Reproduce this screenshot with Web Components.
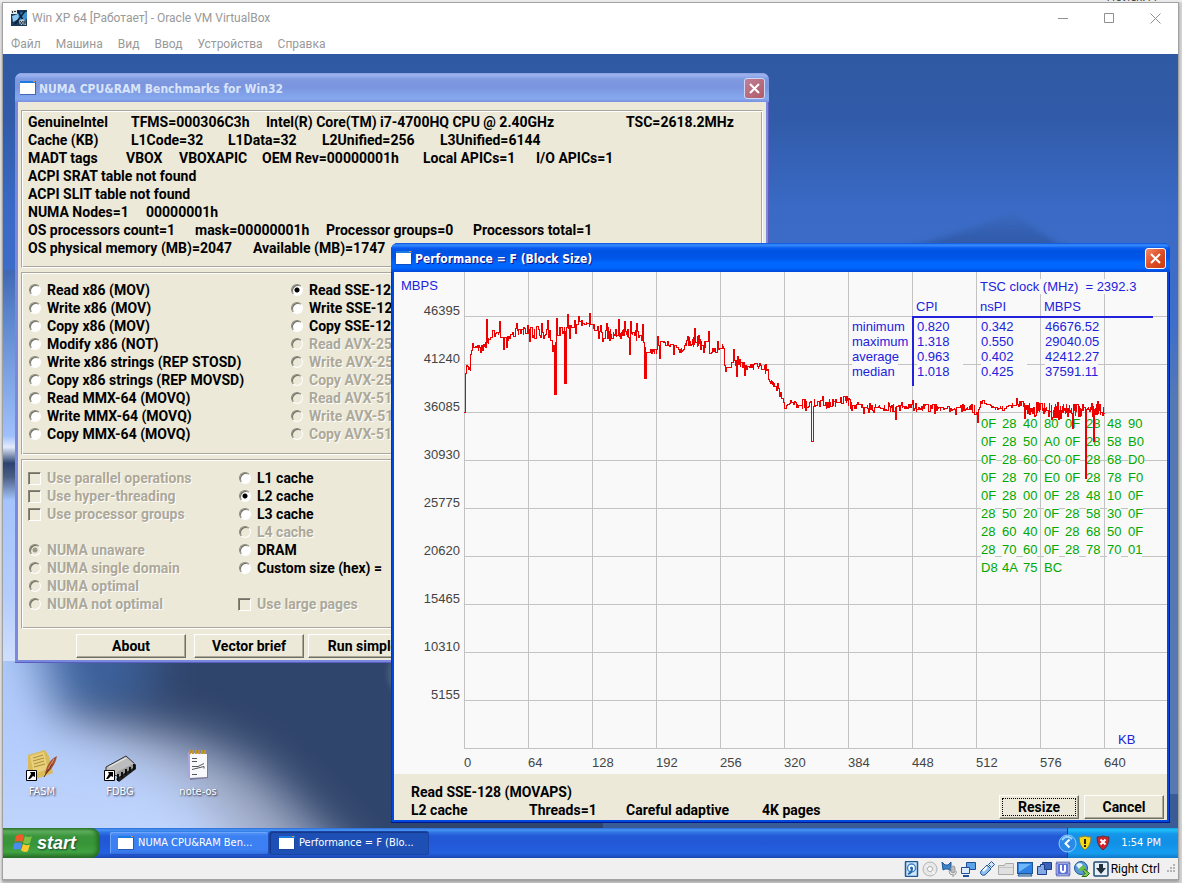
<!DOCTYPE html>
<html lang="ru">
<head>
<meta charset="utf-8">
<title>Win XP 64 [Работает] - Oracle VM VirtualBox</title>
<style>
  html, body { margin: 0; background: #d6d6d6; }
  body { font: 12px/18px Roboto, "Liberation Sans", sans-serif; }
</style>
</head>
<body>
<vm-window caption="Win XP 64 [Работает] - Oracle VM VirtualBox">
  <vm-menu slot="menu">
    <a href="#file">Файл</a><a href="#machine">Машина</a><a href="#view">Вид</a><a href="#input">Ввод</a><a href="#devices">Устройства</a><a href="#help">Справка</a>
  </vm-menu>

  <xp-desktop>
    <desktop-icon slot="icons" kind="fasm">FASM</desktop-icon>
    <desktop-icon slot="icons" kind="fdbg">FDBG</desktop-icon>
    <desktop-icon slot="icons" kind="note">note-os</desktop-icon>

    <xp-window class="numa" slot="windows" caption="NUMA CPU&amp;RAM Benchmarks for Win32">
      <numa-panel></numa-panel>
    </xp-window>
    <xp-window class="perf" slot="windows" active caption="Performance = F (Block Size)">
      <perf-panel></perf-panel>
    </xp-window>
  </xp-desktop>

  <xp-taskbar>
    <task-button>NUMA CPU&amp;RAM Ben...</task-button>
    <task-button pressed>Performance = F (Blo...</task-button>
  </xp-taskbar>

  <vm-status slot="status">Right Ctrl</vm-status>
</vm-window>

<script>
const define = (name, markup, setup) => {
  const tpl = document.createElement('template');
  tpl.innerHTML = markup;
  customElements.define(name, class extends HTMLElement {
    connectedCallback() {
      if (this.shadowRoot) return;
      this.attachShadow({ mode: 'open' }).append(tpl.content.cloneNode(true));
      if (setup) setup(this, this.shadowRoot);
    }
  });
};

const appGlyph = `<svg width="16" height="14" viewBox="0 0 16 14" aria-hidden="true"><path fill="#1a7be0" d="M0 0h16v3H0z"/><path fill="#f28a3c" d="M13 0h2v1h-2z"/><path fill="#fff" d="M0 2h15v11H0z"/><path fill="#1c3f94" opacity=".6" d="M15 2h1v12H0v-1h15z"/></svg>`;

/* ---------- host window ---------- */
define('vm-window', `
<style>
  :host { display: flex; flex-direction: column; min-height: 100vh; box-sizing: border-box; padding: 0 3px 3px 2px; background: linear-gradient(90deg, #e8e8e8 2px, #d6d6d6 0); }
  .behind { height: 2px; margin: 0 -3px 0 -2px; overflow: hidden; display: flex; justify-content: flex-end; align-items: flex-end; padding-right: 26px; background: #ececec; color: #444; font: 12px/10px "Open Sans", sans-serif; }
  .frame { flex: 1; display: flex; flex-direction: column; background: #fff; border: 1px solid #a2a2a2; box-shadow: 0 2px 3px #999; }
  header { display: flex; align-items: center; height: 30px; padding-left: 8px; color: #999; }
  h1 { flex: 1; margin: 0 0 0 5px; font-size: 12px; font-weight: 400; }
  header button { width: 46px; height: 29px; padding: 0; border: 0; background: none; }
  header svg { display: block; margin: auto; }
  main { flex: 1; display: flex; flex-direction: column; }
</style>
<div class="behind" aria-hidden="true"><span>Поиск: A</span></div>
<div class="frame">
  <header>
    <svg style="margin:0" width="16" height="16" viewBox="0 0 16 16" aria-hidden="true"><path fill="#16395c" d="M0 0h16v16H0z"/><path fill="#3c8fd0" d="M6 3l10-1v7l-8 3z"/><path fill="#8cc8ee" d="M1 6l6-2 1 5-6 3z"/><path fill="#dfe6ea" d="M0 0h6v4H0z"/><path fill="#333" d="M1 1h1v2H1zM3 1h2v1H3z"/><path stroke="#0b2036" stroke-width="1.6" fill="none" d="M14 1L4 14M7 1l7 13"/><path fill="#b9c8d4" d="M8 11l3-2 4 1v5H9z"/><path stroke="#26384a" fill="none" d="M9 11l3 4m0-4l-3 4m4 0v-4h2v2h-2"/></svg>
    <h1></h1>
    <button aria-label="Свернуть"><svg width="11" height="11" stroke="#909090"><path d="M0 5.500h10"/></svg></button>
    <button aria-label="Развернуть"><svg width="11" height="11" fill="none" stroke="#909090"><path d="M.5 .5h9v9h-9z"/></svg></button>
    <button aria-label="Закрыть"><svg width="11" height="11" stroke="#909090"><path d="M.5 .5l10 10m0-10l-10 10"/></svg></button>
  </header>
  <slot name="menu"></slot>
  <main><slot></slot></main>
  <slot name="status"></slot>
</div>`, (el, root) => { root.querySelector('h1').textContent = el.getAttribute('caption'); });

define('vm-menu', `
<style>
  :host { display: flex; gap: 15px; height: 21px; padding: 0 8px; line-height: 22px; }
  ::slotted(a) { color: #999; text-decoration: none; }
</style><slot></slot>`);

/* ---------- guest desktop ---------- */
define('xp-desktop', `
<style>
  :host { display: block; flex: 1; position: relative; min-height: 774px; overflow: hidden; background: #3059a5; }
  .wall { position: absolute; inset: 0; width: 100%; height: 100%; }
  .icons { position: absolute; left: 0; bottom: 28px; display: flex; }
  ::slotted(.numa) { position: absolute; left: 12px; top: 19px; width: 754px; }
  ::slotted(.perf) { position: absolute; left: 388px; right: 8px; top: 189px; }
</style>
<svg class="wall" viewBox="0 0 1175 774" preserveAspectRatio="none" aria-hidden="true">
  <defs>
    <linearGradient id="sky" x2="0" y2="1"><stop offset="0" stop-color="#3059a3"/><stop offset=".08" stop-color="#315ba8"/><stop offset=".2" stop-color="#3a6ac6"/><stop offset=".35" stop-color="#3f6fc8"/><stop offset=".45" stop-color="#5579b5"/><stop offset="1" stop-color="#5878b0"/></linearGradient>
    <linearGradient id="hill" x2="0" y2="1"><stop offset="0" stop-color="#3b69bf"/><stop offset="1" stop-color="#2c55a2"/></linearGradient>
    <linearGradient id="edge" x2="0" y2="1"><stop offset="0" stop-color="#4068b4"/><stop offset=".2" stop-color="#5c86cc"/><stop offset=".72" stop-color="#9fc0fb"/><stop offset=".77" stop-color="#e2ecfd"/><stop offset=".84" stop-color="#2c4370"/><stop offset=".9" stop-color="#4b5f85"/><stop offset="1" stop-color="#a4c3fb"/></linearGradient>
    <linearGradient id="mist" x2="0" y2="1"><stop offset="0" stop-color="#a4c3fb"/><stop offset=".6" stop-color="#b4cdfc"/><stop offset="1" stop-color="#cfdefc"/></linearGradient>
    <filter id="soft" x="-60%" y="-60%" width="220%" height="220%" color-interpolation-filters="sRGB"><feGaussianBlur stdDeviation="24"/></filter>
    <filter id="dim" x="-40%" y="-40%" width="180%" height="180%"><feGaussianBlur stdDeviation="3"/></filter>
  </defs>
  <path fill="url(#sky)" d="M0 0h1175v774H0z"/>
  <path fill="url(#hill)" filter="url(#dim)" d="M880 200Q960 180 1009 159L1070 200z"/>
  <path fill="#30456b" d="M0 600h900v174H0z"/>
  <path fill="#3a5c96" d="M600 740h575v34H600z"/>
  <ellipse cx="80" cy="615" rx="75" ry="45" fill="#4470b4" opacity=".7" filter="url(#soft)"/>
  <path fill="#a0abc6" filter="url(#soft)" d="M20 680Q170 655 260 720L390 850H20z"/>
  <path fill="url(#mist)" filter="url(#soft)" d="M-100 420H20L40 600L60 670Q130 695 190 735L310 880H-100z"/>
  <path fill="url(#mist)" d="M0 440h12v167H0z"/>
  <path fill="url(#edge)" d="M0 216h20v230H0z"/>
  <ellipse cx="396" cy="620" rx="10" ry="18" fill="#6d7f9e" opacity=".6" filter="url(#dim)"/>
</svg>
<div class="icons"><slot name="icons"></slot></div>
<slot name="windows"></slot>`);

const pictures = {
  fasm: `<path fill="#d9bb5c" d="M2 5l17-5 4 6 4 17-17 6L2 19z"/><path fill="#e8cf7c" d="M4 6l14-4 4 17-14 5z"/><path stroke="#b08c35" fill="none" d="M7 8l10-3M7 11l11-3M8 14l10-3M8 17l11-3"/><path fill="#b98f3e" d="M2 20l6 4 2 6-4-1z"/><path fill="#a5512f" d="M31 6q-9 4-12 17l1 1q9-7 11-18z"/><path stroke="#5f2a18" fill="none" d="M18 27l8-13"/><path stroke="#dc9a74" fill="none" d="M22 19l6-10"/>`,
  fdbg: `<path fill="#222" d="M12 29l3 3 17-13v-5z"/><path fill="#bdbdbd" stroke="#333" d="M2 17L22 6l9 8-18 12-11-4z"/><path fill="#9a9a9a" d="M13 22l18-9v4L13 27z"/><path stroke="#111" stroke-width="2" d="M14 24v7m4-9v6m4-9v6m4-8v6m4-9v6"/><path stroke="#eee" d="M5 17l17-9"/>`,
  note: `<path fill="#7a7a99" d="M7 3l19 1v24L8 30z"/><path fill="#f7f8fc" d="M7 3l18 1v23L8 28z"/><path fill="#a9a5dc" d="M6 2l2 1v25H6z"/><path stroke="#c3952c" stroke-width="2" d="M8 0v4m3-4v4m3-4v4m3-4v4m3-4v4m3-4v4"/><path stroke="#555" fill="none" d="M10 8.500h5M10 11.500h5M10 16.500h6l6-3M10 19.500l12-3v2M10 24.500h5"/>`
};
define('desktop-icon', `
<style>
  :host { display: flex; flex-direction: column; align-items: center; width: 78px; color: #fff; font: 11px/16px "DejaVu Sans Condensed", "DejaVu Sans", sans-serif; text-shadow: 1px 1px 2px #223; }
  .pic { position: relative; width: 32px; height: 34px; }
  .link { position: absolute; left: 0; bottom: 3px; }
</style>
<div class="pic"><svg class="art" width="32" height="32" viewBox="0 0 32 32" aria-hidden="true"></svg><svg class="link" width="11" height="11" viewBox="0 0 11 11" aria-hidden="true"><path fill="#fff" stroke="#000" d="M.5 .5h10v10H.5z"/><path d="M4 2h5v5L7 6 4 9H2l3-5z"/></svg></div>
<span><slot></slot></span>`, (el, root) => {
  const kind = el.getAttribute('kind');
  root.querySelector('.art').innerHTML = pictures[kind];
  if (kind === 'note') root.querySelector('.link').remove();
});

/* ---------- XP controls ---------- */
define('xp-window', `
<style>
  :host { display: flex; flex-direction: column; box-sizing: border-box; border-radius: 7px 7px 0 0; background: #7a88dd; padding: 0 3px 3px; box-shadow: inset -1px -1px #5a5cc0, inset 0 1px #90a8e8; }
  :host([active]) { background: #0148e0; box-shadow: inset -1px -1px #00168c, inset 1px 0 #0133c8; }
  header { display: flex; align-items: center; gap: 3px; height: 29px; margin: 0 -3px; padding: 1px 4px 0 5px; box-sizing: border-box; border-radius: 7px 7px 0 0; color: #d8e4f8;
    background: linear-gradient(#8a9fe0, #9db5f0 2px, #7f9ae0 6px, #7b94df 14px, #82a3ea 22px, #85a8ee 26px, #7a8fdc); }
  :host([active]) header { color: #fff; text-shadow: 1px 1px #0f1089; background: linear-gradient(#0a4fd8, #3a90ff 2px, #0a5cf0 5px, #0054e3 8px, #0055e8 15px, #0067ff 20px, #0066fc 25px, #0046d8); }
  h2 { flex: 1; margin: 0; padding-top: 2px; font: 700 12px/18px "DejaVu Sans Condensed", "DejaVu Sans", sans-serif; white-space: nowrap; }
  button { width: 21px; height: 21px; padding: 0; border: 1px solid #cfd8f5; border-radius: 3px; background: linear-gradient(135deg, #c08098, #b05a68); }
  :host([active]) button { border-color: #fff; background: linear-gradient(135deg, #f08a6a, #e04e26 50%, #c83a10); }
  button svg { display: block; margin: auto; }
</style>
<header>${appGlyph}<h2></h2><button aria-label="Close"><svg width="13" height="13" stroke="#fff" stroke-width="2"><path d="M2 2l9 9m0-9l-9 9"/></svg></button></header>
<slot></slot>`, (el, root) => { root.querySelector('h2').textContent = el.getAttribute('caption'); });

define('xp-group', `
<style>
  :host { display: block; border: 1px solid; border-color: #aca899 #fff #fff #aca899; box-shadow: inset 1px 1px #fff, inset -1px -1px #aca899; padding: 2px 6px 10px; }
</style><slot></slot>`);

define('xp-option', `
<style>
  :host { display: block; height: 18px; color: #000; }
  label { display: flex; align-items: center; gap: 6px; height: 18px; white-space: nowrap; }
  input { appearance: none; box-sizing: border-box; flex: none; width: 12px; height: 12px; margin: 0 0 0 1px; border: 1px solid; border-color: #8a887a #fff #fff #8a887a; background: #fff; box-shadow: inset 1px 1px #716f64; }
  [type=radio] { border-radius: 6px; }
  [type=checkbox] { margin-left: 0; width: 13px; height: 13px; }
  [type=radio]:checked { background: radial-gradient(circle at 5px 5px, #000 2px, #fff 3px); }
  input:disabled { background: #ece9d8; }
  [type=radio]:checked:disabled { background: radial-gradient(circle at 5px 5px, #9c9a8b 2px, #ece9d8 3px); }
  :host([disabled]) span { color: #aca899; text-shadow: 1px 1px #fff; }
</style>
<label><input><span><slot></slot></span></label>`, (el, root) => {
  const input = root.querySelector('input');
  input.type = el.getAttribute('type') || 'radio';
  input.disabled = el.hasAttribute('disabled');
  input.checked = el.hasAttribute('checked');
});

define('xp-button', `
<style>
  :host { display: block; }
  button { display: block; box-sizing: border-box; width: 100%; height: 24px; padding: 2px; border: 1px solid; border-color: #fff #716f64 #716f64 #fff; background: #ece9d8; box-shadow: inset -1px -1px #aca899; color: #000; font: inherit; line-height: 16px; white-space: nowrap; }
  span { display: block; border: 1px solid transparent; }
  :host([focused]) span { border: 1px dotted #000; }
</style><button><span><slot></slot></span></button>`);

define('numa-panel', `
<style>
  :host { display: block; padding: 8px 3px 2px; background: #ece9d8; color: #000; font: 700 14px/18px Roboto, "Liberation Sans", sans-serif; }
  .stack { display: grid; gap: 4px; }
  .info div { display: grid; white-space: nowrap; grid-template-columns: var(--c, 1fr); height: 18px; }
  .ops { padding: 8px 6px 11px; }
  .modes { padding: 9px 6px 15px; }
  .cols { display: grid; grid-template-columns: 262px 1fr; grid-auto-flow: column; grid-template-rows: repeat(9, 18px); }
  .modes .cols { grid-template-columns: 210px 1fr; grid-template-rows: repeat(8, 18px); }
  .skip { height: 18px; }
  nav { display: flex; gap: 8px; padding: 5px 0 0 55px; }
  nav xp-button { width: 110px; }
  nav xp-button + xp-button + xp-button { margin-left: -4px; }
</style>
<div class="stack">
<xp-group class="info">
  <div style="--c:103px 135px 360px 1fr"><span>GenuineIntel</span><span>TFMS=000306C3h</span><span>Intel(R) Core(TM) i7-4700HQ CPU @ 2.40GHz</span><span>TSC=2618.2MHz</span></div>
  <div style="--c:103px 97px 94px 118px 1fr"><span>Cache (KB)</span><span>L1Code=32</span><span>L1Data=32</span><span>L2Unified=256</span><span>L3Unified=6144</span></div>
  <div style="--c:98px 53px 83px 161px 113px 1fr"><span>MADT tags</span><span>VBOX</span><span>VBOXAPIC</span><span>OEM Rev=00000001h</span><span>Local APICs=1</span><span>I/O APICs=1</span></div>
  <div>ACPI SRAT table not found</div>
  <div>ACPI SLIT table not found</div>
  <div style="--c:118px 1fr"><span>NUMA Nodes=1</span><span>00000001h</span></div>
  <div style="--c:167px 131px 147px 1fr"><span>OS processors count=1</span><span>mask=00000001h</span><span>Processor groups=0</span><span>Processors total=1</span></div>
  <div style="--c:225px 1fr"><span>OS physical memory (MB)=2047</span><span>Available (MB)=1747</span></div>
</xp-group>
<xp-group class="ops"><div class="cols">
  <xp-option>Read x86 (MOV)</xp-option><xp-option>Write x86 (MOV)</xp-option><xp-option>Copy x86 (MOV)</xp-option><xp-option>Modify x86 (NOT)</xp-option><xp-option>Write x86 strings (REP STOSD)</xp-option><xp-option>Copy x86 strings (REP MOVSD)</xp-option><xp-option>Read MMX-64 (MOVQ)</xp-option><xp-option>Write MMX-64 (MOVQ)</xp-option><xp-option>Copy MMX-64 (MOVQ)</xp-option>
  <xp-option checked>Read SSE-128</xp-option><xp-option>Write SSE-128</xp-option><xp-option>Copy SSE-128</xp-option><xp-option disabled>Read AVX-256</xp-option><xp-option disabled>Write AVX-256</xp-option><xp-option disabled>Copy AVX-256</xp-option><xp-option disabled>Read AVX-512</xp-option><xp-option disabled>Write AVX-512</xp-option><xp-option disabled>Copy AVX-512</xp-option>
</div></xp-group>
<xp-group class="modes"><div class="cols">
  <xp-option type="checkbox" disabled>Use parallel operations</xp-option><xp-option type="checkbox" disabled>Use hyper-threading</xp-option><xp-option type="checkbox" disabled>Use processor groups</xp-option><div class="skip"></div><xp-option disabled checked>NUMA unaware</xp-option><xp-option disabled>NUMA single domain</xp-option><xp-option disabled>NUMA optimal</xp-option><xp-option disabled>NUMA not optimal</xp-option>
  <xp-option>L1 cache</xp-option><xp-option checked>L2 cache</xp-option><xp-option>L3 cache</xp-option><xp-option disabled>L4 cache</xp-option><xp-option>DRAM</xp-option><xp-option>Custom size (hex) =</xp-option><div class="skip"></div><xp-option type="checkbox" disabled>Use large pages</xp-option>
</div></xp-group>
</div>
<nav><xp-button>About</xp-button><xp-button>Vector brief</xp-button><xp-button>Run simple</xp-button></nav>`);

/* ---------- performance window ---------- */
define('perf-panel', `
<style>
  :host { display: block; background: #ece9d8; color: #000; font: 700 14px/18px Roboto, "Liberation Sans", sans-serif; }
  footer { display: flex; align-items: flex-start; justify-content: space-between; height: 46px; padding: 9px 3px 0 17px; box-sizing: border-box; }
  .row { display: grid; grid-template-columns: 118px 97px 136px auto; white-space: nowrap; }
  .btns { display: flex; gap: 5px; padding-top: 12px; }
  .btns xp-button { width: 80px; }
</style>
<perf-chart></perf-chart>
<footer>
  <div><div>Read SSE-128 (MOVAPS)</div><div class="row"><span>L2 cache</span><span>Threads=1</span><span>Careful adaptive</span><span>4K pages</span></div></div>
  <div class="btns"><xp-button focused>Resize</xp-button><xp-button>Cancel</xp-button></div>
</footer>`);

define('perf-chart', `
<style>
  :host { display: block; position: relative; height: 502px; background: #f9f9f9; overflow: hidden; font: 13px/15px "Liberation Sans", Arial, sans-serif; color: #2222dd; }
  svg { position: absolute; inset: 0; width: 100%; height: 100%; shape-rendering: crispEdges; pointer-events: none; }
  .grid { stroke: #c3c3c3; fill: none; }
  .grid text { stroke: none; fill: #444; }
  .grid .unit { fill: #2222dd; }
  .trace { fill: none; stroke: #ee0000; }
  .over { position: absolute; left: 458px; top: 7px; }
  .tsc { margin: 0 0 5px 128px; width: 155px; white-space: pre; background: #f9f9f9; }
  table { border-collapse: separate; border-spacing: 0; table-layout: fixed; width: 301px; }
  td, th { height: 15px; padding: 0; font-weight: 400; text-align: left; vertical-align: top; }
  thead th { height: 17px; padding-left: 4px; border-bottom: 2px solid #2222dd; }
  tbody td { padding-left: 5px; }
  tbody td:nth-child(2) { border-left: 2px solid #2222dd; padding-left: 3px; }
  tbody tr:first-child > * { padding-top: 1px; }
  tbody tr:last-child > * { padding-bottom: 7px; }
  th span, td span { display: inline-block; min-width: 46px; background: #f9f9f9; }
  .hex { display: grid; grid-template-columns: repeat(8, 21px); margin: 29px 0 0 129px; line-height: 18px; color: #00a800; }
  .hex span { justify-self: start; height: 18px; background: #f9f9f9; }
</style>
<svg class="grid" aria-hidden="true"></svg>
<div class="over">
  <p class="tsc">TSC clock (MHz)  = 2392.3</p>
  <table>
    <colgroup><col width="60"><col width="64"><col width="64"><col></colgroup>
    <thead><tr><td></td><th scope="col">CPI</th><th scope="col">nsPI</th><th scope="col">MBPS</th></tr></thead>
    <tbody>
      <tr><th scope="row"><span>minimum</span></th><td><span>0.820</span></td><td><span>0.342</span></td><td><span>46676.52</span></td></tr>
      <tr><th scope="row"><span>maximum</span></th><td><span>1.318</span></td><td><span>0.550</span></td><td><span>29040.05</span></td></tr>
      <tr><th scope="row"><span>average</span></th><td><span>0.963</span></td><td><span>0.402</span></td><td><span>42412.27</span></td></tr>
      <tr><th scope="row"><span>median</span></th><td><span>1.018</span></td><td><span>0.425</span></td><td><span>37591.11</span></td></tr>
    </tbody>
  </table>
  <div class="hex"></div>
</div>
<svg class="trace" aria-hidden="true"><path/></svg>`, (el, root) => {
  const bytes = '0F 28 40 80 0F 28 48 90 0F 28 50 A0 0F 28 58 B0 0F 28 60 C0 0F 28 68 D0 0F 28 70 E0 0F 28 78 F0 0F 28 00 0F 28 48 10 0F 28 50 20 0F 28 58 30 0F 28 60 40 0F 28 68 50 0F 28 70 60 0F 28 78 70 01 D8 4A 75 BC';
  root.querySelector('.hex').innerHTML = bytes.split(' ').map(b => `<span>${b}</span>`).join('');

  const X0 = 70, Y0 = 476, STEP_X = 64, STEP_Y = 48;
  let g = '';
  for (let i = 0; i <= 10; i++) {
    const x = X0 + i * STEP_X;
    g += `<path d="M${x + .5} 0V${Y0}"/><text x="${x}" y="495">${i * 64}</text>`;
  }
  for (let i = 0; i <= 9; i++) {
    const y = Y0 - i * STEP_Y;
    g += `<line x1="${X0}" x2="100%" y1="${y + .5}" y2="${y + .5}"/>`;
    if (i) g += `<text x="66" y="${y - 1}" text-anchor="end">${i * 5155}</text>`;
  }
  g += '<text class="unit" x="7" y="18">MBPS</text><text class="unit" x="724" y="472">KB</text>';
  root.querySelector('.grid').innerHTML = g;

  /* throughput trend: [x, level, jitter], then single outliers */
  const trend = [[71,140,0],[72,101,0],[73,93,1],[76,98,4],[77,85,3],[79,72,2],[82,77,4],[88,76,4],[93,70,4],[96,68,2],[99,62,5],[106,60,6],[110,66,5],[118,66,6],[123,58,5],[134,60,7],[146,61,5],[156,62,7],[159,78,3],[163,60,5],[172,58,5],[176,53,5],[188,50,5],[199,54,4],[202,59,7],[218,61,5],[236,61,7],[249,62,5],[252,80,4],[262,78,4],[268,70,4],[278,71,3],[286,78,4],[293,70,6],[304,70,8],[316,75,7],[329,73,7],[331,92,6],[340,88,5],[348,90,4],[354,95,4],[366,94,5],[373,97,4],[377,110,4],[384,115,4],[388,126,3],[391,135,3],[395,131,4],[408,133,6],[421,131,5],[440,131,5],[452,127,5],[458,134,4],[472,135,5],[505,134,4],[540,136,4],[575,135,5],[583,138,3],[588,129,3],[596,130,3],[601,136,4],[618,134,4],[624,130,4],[630,134,4],[633,136,7],[655,137,8],[672,138,7],[690,137,7],[711,136,7]];
  const peaks = {93:47,106:49,110:77,113:75,123:51,136:69,148:51,154:48,161:122,162:122,163:46,171:111,172:111,174:42,176:66,182:61,185:44,196:41,205:66,209:69,213:51,225:47,231:49,236:82,237:49,243:51,249:52,251:106,252:106,264:64,266:86,280:82,294:64,301:56,315:59,318:80,332:99,340:77,343:104,351:103,418:169,419:169,429:124,450:124,470:141,502:147,519:128,541:141,562:142,584:150,623:126,631:146,641:144,658:147,665:147,679:156,692:206,700:169};
  const doubled = [93, 161, 171, 251, 692, 700, 679];
  let seed = 29, y = 140, d = 'M70 140.500H71', k = 0;
  const rnd = () => (seed = (seed * 16807) % 2147483647) / 2147483647;
  for (let x = 72; x <= 710; x++) {
    while (trend[k + 1][0] <= x) k++;
    const a = trend[k], b = trend[k + 1], t = (x - a[0]) / (b[0] - a[0]);
    const level = a[1] + (b[1] - a[1]) * t, jitter = a[2];
    if (peaks[x]) {
      d += `V${peaks[x] + .5}H${x + .5}`;
      if (doubled.includes(x)) d += `V${Math.round(level) + .5}V${peaks[x] + .5}`;
      if (peaks[x + 1] === undefined) y = Math.round(level);
      continue;
    }
    if (rnd() > .3 || Math.abs(y - level) > jitter) y = Math.round(level + (2 * rnd() - 1) * jitter);
    d += `V${y + .5}H${x + .5}`;
    if (jitter > 3 && rnd() < (x > 630 ? .75 : .35)) {
      const reach = Math.round(level + (y > level ? -1 : 1) * rnd() * jitter);
      d += `V${reach + .5}V${y + .5}`;
    }
  }
  root.querySelector('.trace path').setAttribute('d', d);
});

/* ---------- taskbar and status bar ---------- */
define('xp-taskbar', `
<style>
  :host { display: flex; height: 30px; color: #fff; font: 11px/16px "DejaVu Sans Condensed", "DejaVu Sans", sans-serif; background: linear-gradient(#2c68d8, #4796f2 2px, #3278e4 4px, #2259d6 8px, #2258d6 15px, #2460e0 25px, #1c47b0); }
  .start { display: flex; align-items: center; gap: 4px; width: 97px; height: 30px; padding: 0 0 0 10px; border: 0; border-radius: 0 9px 9px 0; color: #fff; font: italic 700 18px/24px "Liberation Sans", Arial, sans-serif; text-shadow: 1px 1px 2px #143; background: linear-gradient(#2f7f2f, #62b062 3px, #3c963c 8px, #389438 16px, #41a341 24px, #2a7028); box-shadow: inset -3px 0 4px #246a24; }
  .tasks { display: flex; gap: 2px; flex: 1; padding: 4px 0 4px 10px; }
  .tray { position: relative; display: flex; align-items: center; gap: 4px; height: 30px; padding: 0 17px 0 10px; box-sizing: border-box; border-left: 1px solid #123f9c; background: linear-gradient(#15a0e8, #1fc0f8 2px, #1496ea 6px, #118fe6 14px, #149df0 25px, #0f78c8); }
  .more { position: absolute; left: -10px; top: 6px; padding: 0; border: 0; background: none; width: 19px; height: 19px; }
  time { margin-left: 7px; }
  svg { display: block; }
</style>
<button class="start"><svg width="20" height="20" viewBox="0 0 20 20" aria-hidden="true"><path fill="#ee5a2a" d="M3 3q4-3 8-.500L9.500 9Q6 7 1.500 9z"/><path fill="#7cc243" d="M12 3q4 2 7 0l-2 7q-3 2-7 0z"/><path fill="#4a8cf0" d="M1 10.500q4-2 8 0L7.500 17Q4 15-.5 17z"/><path fill="#fbc82e" d="M10 11q3 2 7 .500L15 18q-3 2-7-.5z"/></svg><span>start</span></button>
<div class="tasks"><slot></slot></div>
<div class="tray">
  <button class="more" aria-label="Show hidden icons"><svg width="19" height="19" viewBox="0 0 19 19"><circle cx="9.500" cy="9.500" r="8.500" fill="#2b8ae8" stroke="#8fd0ff"/><path d="M4 6q5-6 10-1" stroke="#9fd4ff" fill="none" stroke-width="2"/><path d="M11.500 5.500l-4 4 4 4" stroke="#fff" stroke-width="2" fill="none"/></svg></button>
  <svg width="14" height="16" viewBox="0 0 14 16" aria-hidden="true"><path fill="#f7d716" stroke="#7f7b50" d="M1 2q4 0 6-1 2 1 6 1 0 9-6 13Q1 11 1 2z"/><path fill="#222" d="M6 4h2v5H6zM6 10h2v2H6z"/></svg>
  <svg width="14" height="16" viewBox="0 0 14 16" aria-hidden="true"><path fill="#d2222a" stroke="#5d3038" d="M1 2q4 0 6-1 2 1 6 1 0 9-6 13Q1 11 1 2z"/><path stroke="#fff" stroke-width="2" d="M4.500 4.500l5 5m0-5l-5 5"/></svg>
  <time datetime="13:54">1:54 PM</time>
</div>`);

define('task-button', `
<style>
  :host { display: block; width: 158px; }
  button { display: flex; align-items: center; gap: 4px; width: 100%; height: 22px; padding: 0 8px; border: 0; border-radius: 2px; color: #fff; font: inherit; white-space: nowrap; background: linear-gradient(#5a98fa, #3c80f2 4px, #3b7ff2 18px, #3270e0); box-shadow: inset 1px 1px #6aa4fb, 1px 1px #1f4fc0; }
  :host([pressed]) button { padding-left: 9px; background: #1d4fb4; box-shadow: inset 1px 1px #15398c, 0 0 0 1px #1a44a4; }
</style><button>${appGlyph}<span><slot></slot></span></button>`);

const statusIcons = [
  '<rect x="2.500" y=".500" width="12" height="15" rx="1" fill="#cfe6fb" stroke="#1d5796" stroke-width="1.500"/><circle cx="8.500" cy="7" r="4" fill="#fff" stroke="#3f86cc" stroke-width="1.500"/><path d="M9 7q0 5-4 6" fill="none" stroke="#2568b0" stroke-width="2"/><circle cx="8.500" cy="7" r="1.500" fill="#2568b0"/>',
  '<circle cx="8" cy="8" r="7" fill="#e8e8e8" stroke="#b4b4b4"/><circle cx="8" cy="8" r="2.500" fill="#fff" stroke="#aaa"/><path d="M4 4l2 2m4 4l3 3" stroke="#fff"/>',
  '<path fill="#3e83c8" stroke="#1d5796" d="M1 1l3 3h3l3-3v9L7 8H4L2 9z"/><rect x="10" y="5" width="4" height="7" rx="2" fill="#bbb" stroke="#999"/><path stroke="#999" fill="none" d="M8 10q0 4 4 4t3-4M12 14v2"/>',
  '<path fill="#5ea2e8" stroke="#1c4f96" d="M6.500 1.500h9v7h-9z"/><path fill="#dcecfb" stroke="#1c4f96" d="M1.500 6.500h8v6h-8z"/><path stroke="#1c4f96" stroke-width="2" d="M3 15h6"/>',
  '<path fill="#cfe4f8" stroke="#1d5796" d="M9.500 3.500l3-3 3 3-3 3z"/><path fill="#8fc0f0" stroke="#1d5796" d="M8 4l4 4-6 6q-3 1-4-1-1-1 0-3z"/><path stroke="#fff" stroke-width="2" d="M8 6L4 10"/>',
  '<path fill="#e0e0e0" stroke="#aaa" d="M.5 4.500h6l1-2h8v11H.5z"/><path stroke="#c4c4c4" d="M1 6.500h14"/>',
  '<rect x=".5" y="1.500" width="15" height="11" fill="#2f80e4" stroke="#1d5796"/><path fill="#6db6fb" d="M2 3h12L2 11z"/><path fill="#c8d4de" stroke="#1d5796" d="M2 13h12l1 2H1z"/>',
  '<path fill="#3d63b8" stroke="#1c3f8a" d="M6.500 1.500h9v7h-9z"/><path fill="#85a9e6" stroke="#1c3f8a" d="M1.500 5.500h3v-2h4v5h2v5h-9z"/>',
  '<rect x="1.500" y="1.500" width="13" height="13" fill="#c3cdf6" stroke="#2a3aa0" stroke-width="2" stroke-dasharray="1 1"/><rect x="3" y="3" width="10" height="10" fill="#5d72d8"/><path fill="none" stroke="#fff" stroke-width="2" d="M6 4v5q0 2 2 2t2-2V4"/>',
  '<circle cx="7" cy="7" r="6.500" fill="#5a9ad8" stroke="#1d5796"/><path fill="#e3f0fa" d="M2 4q4-4 7 0L5 8z"/><path fill="#7fc850" stroke="#2a6a1a" d="M8 15.500l3-3-3-4h3l4.500 4-3 3z"/><path fill="#6cbf45" d="M4 9l5-5 3 3-4 3z"/>',
  '<rect x="1" y="1" width="14" height="14" rx="1" fill="#e8f0f6" stroke="#1f4a72" stroke-width="1.500"/><path fill="#20303c" d="M6 3h4v4h3l-5 6-5-6h3z"/>'
];
define('vm-status', `
<style>
  :host { display: flex; align-items: center; justify-content: flex-end; height: 21px; padding-right: 2px; background: #f0f0f0; color: #000; }
  .icons { display: flex; gap: 3px; margin-right: 2px; }
  .grip { margin-left: 7px; }
  svg { display: block; }
</style>
<div class="icons"></div><span><slot></slot></span>
<svg class="grip" width="9" height="9" fill="#b4b4b4" aria-hidden="true"><path d="M6 0h2v2H6zM3 3h2v2H3zM6 3h2v2H6zM0 6h2v2H0zM3 6h2v2H3zM6 6h2v2H6z"/></svg>`, (el, root) => {
  root.querySelector('.icons').innerHTML = statusIcons.map(s => `<svg width="16" height="16" viewBox="0 0 16 16" aria-hidden="true">${s}</svg>`).join('');
});
</script>
</body>
</html>
